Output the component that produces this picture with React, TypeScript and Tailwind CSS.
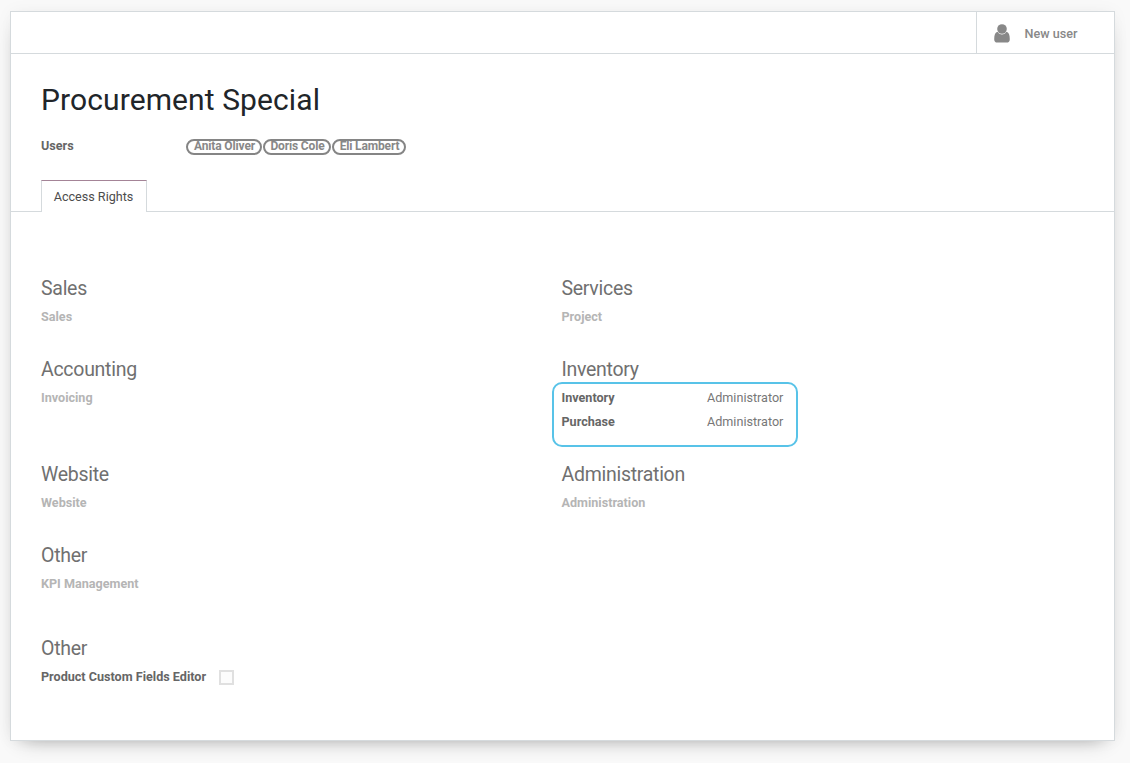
import React from "react";

type Row = { label: string; value?: string };

function Section({ title, rows, muted = true, className }: { title: string; rows: Row[]; muted?: boolean; className: string }) {
  return (
    <section className={className}>
      <h2 className="h-6 pt-px text-[19.5px] leading-6 tracking-[-0.28px] text-[#707070]">{title}</h2>
      <div className="pt-[5px]">
        {rows.map((row) => (
          <div key={row.label} className="flex h-6 items-center">
            <span className={`w-[145.5px] font-bold ${muted ? "text-[#b5b5b5]" : "text-[#666666]"}`}>{row.label}</span>
            {row.value && <span className="text-[#777777]">{row.value}</span>}
          </div>
        ))}
      </div>
    </section>
  );
}

const users = [
  { name: "Anita Oliver", box: "w-[76px]" },
  { name: "Doris Cole", box: "w-[68px]" },
  { name: "Eli Lambert", box: "w-[74px]" },
];

export default function App() {
  return (
    <div className="h-[763px] w-[1130px] overflow-hidden bg-[#f9f9f9] pl-[10px] pt-[11px] font-['Roboto',sans-serif] text-[12.6px] leading-4">
      <main className="h-[730px] w-[1105px] border border-[#d5dadd] bg-white shadow-[0_8px_20px_-12px_rgba(0,0,0,0.45),0_0_16px_rgba(0,0,0,0.04)]">
        <header className="flex h-[42px] justify-end border-b border-[#d5dadd]">
          <button className="flex w-[138px] items-center border-l border-[#d5dadd] pl-[17px] font-medium text-[#888888]">
            <svg viewBox="0 0 16 19" className="mt-px h-[19px] w-4" fill="#888888">
              <circle cx="8" cy="5" r="4.8" />
              <path d="M3.6 7.8C1.2 8.4.2 11 .2 15.2c0 2.1 1.2 3.4 3.1 3.4h9.400c1.900 0 3.100-1.300 3.100-3.400 0-4.200-1-6.800-3.400-7.400-1 1.800-2.500 2.700-4.400 2.700s-3.400-.900-4.400-2.700Z" />
            </svg>
            <span className="ml-[14.5px] pt-[2px]">New user</span>
          </button>
        </header>

        <div className="px-[30px] pt-[26px]">
          <h1 className="h-10 text-[30px] leading-[40px] tracking-[0.1px] text-[#212529]">Procurement Special</h1>
          <div className="mt-[18px] flex h-4">
            <span className="w-[145px] font-bold text-[#666666]">Users</span>
            <div className="flex gap-[1px] pt-[1px]">
              {users.map((user) => (
                <span key={user.name} className={`flex h-4 justify-center whitespace-nowrap rounded-full border-2 border-[#858585] pl-px text-[12px] font-bold leading-[11px] tracking-[-0.15px] text-[#888888] ${user.box}`}>
                  {user.name}
                </span>
              ))}
            </div>
          </div>
        </div>

        <nav className="mt-[26px] flex h-8">
          <div className="w-[30px] border-b border-[#d5dadd]" />
          <button className="w-[106px] border-x border-t border-x-[#d5dadd] border-t-[#a48497] pr-px text-[#4c4c4c]">Access Rights</button>
          <div className="flex-1 border-b border-[#d5dadd]" />
        </nav>

        <div className="grid grid-cols-[520.5px_1fr] pl-[30px] pt-[64px]">
          <Section className="h-[81px]" title="Sales" rows={[{ label: "Sales" }]} />
          <Section className="h-[81px]" title="Services" rows={[{ label: "Project" }]} />
          <Section className="h-[105px]" title="Accounting" rows={[{ label: "Invoicing" }]} />
          <div className="relative h-[105px]">
            <Section className="h-full" title="Inventory" muted={false} rows={[{ label: "Inventory", value: "Administrator" }, { label: "Purchase", value: "Administrator" }]} />
            <div className="absolute left-[-9.5px] top-[25px] h-[65px] w-[246px] rounded-[10px] border-2 border-[#58c3e8]" />
          </div>
          <Section className="h-[81px]" title="Website" rows={[{ label: "Website" }]} />
          <Section className="h-[81px]" title="Administration" rows={[{ label: "Administration" }]} />
          <Section className="col-span-2 h-[93px]" title="Other" rows={[{ label: "KPI Management" }]} />
          <section className="col-span-2">
            <h2 className="h-6 pt-px text-[19.5px] leading-6 tracking-[-0.28px] text-[#707070]">Other</h2>
            <label className="mt-[5px] flex h-6 items-center font-bold text-[#666666]">
              <span className="w-[178px]">Product Custom Fields Editor</span>
              <input type="checkbox" className="size-[15px] appearance-none border-2 border-[#e0e0e0] bg-[#fcfcfc]" />
            </label>
          </section>
        </div>
      </main>
    </div>
  );
}
